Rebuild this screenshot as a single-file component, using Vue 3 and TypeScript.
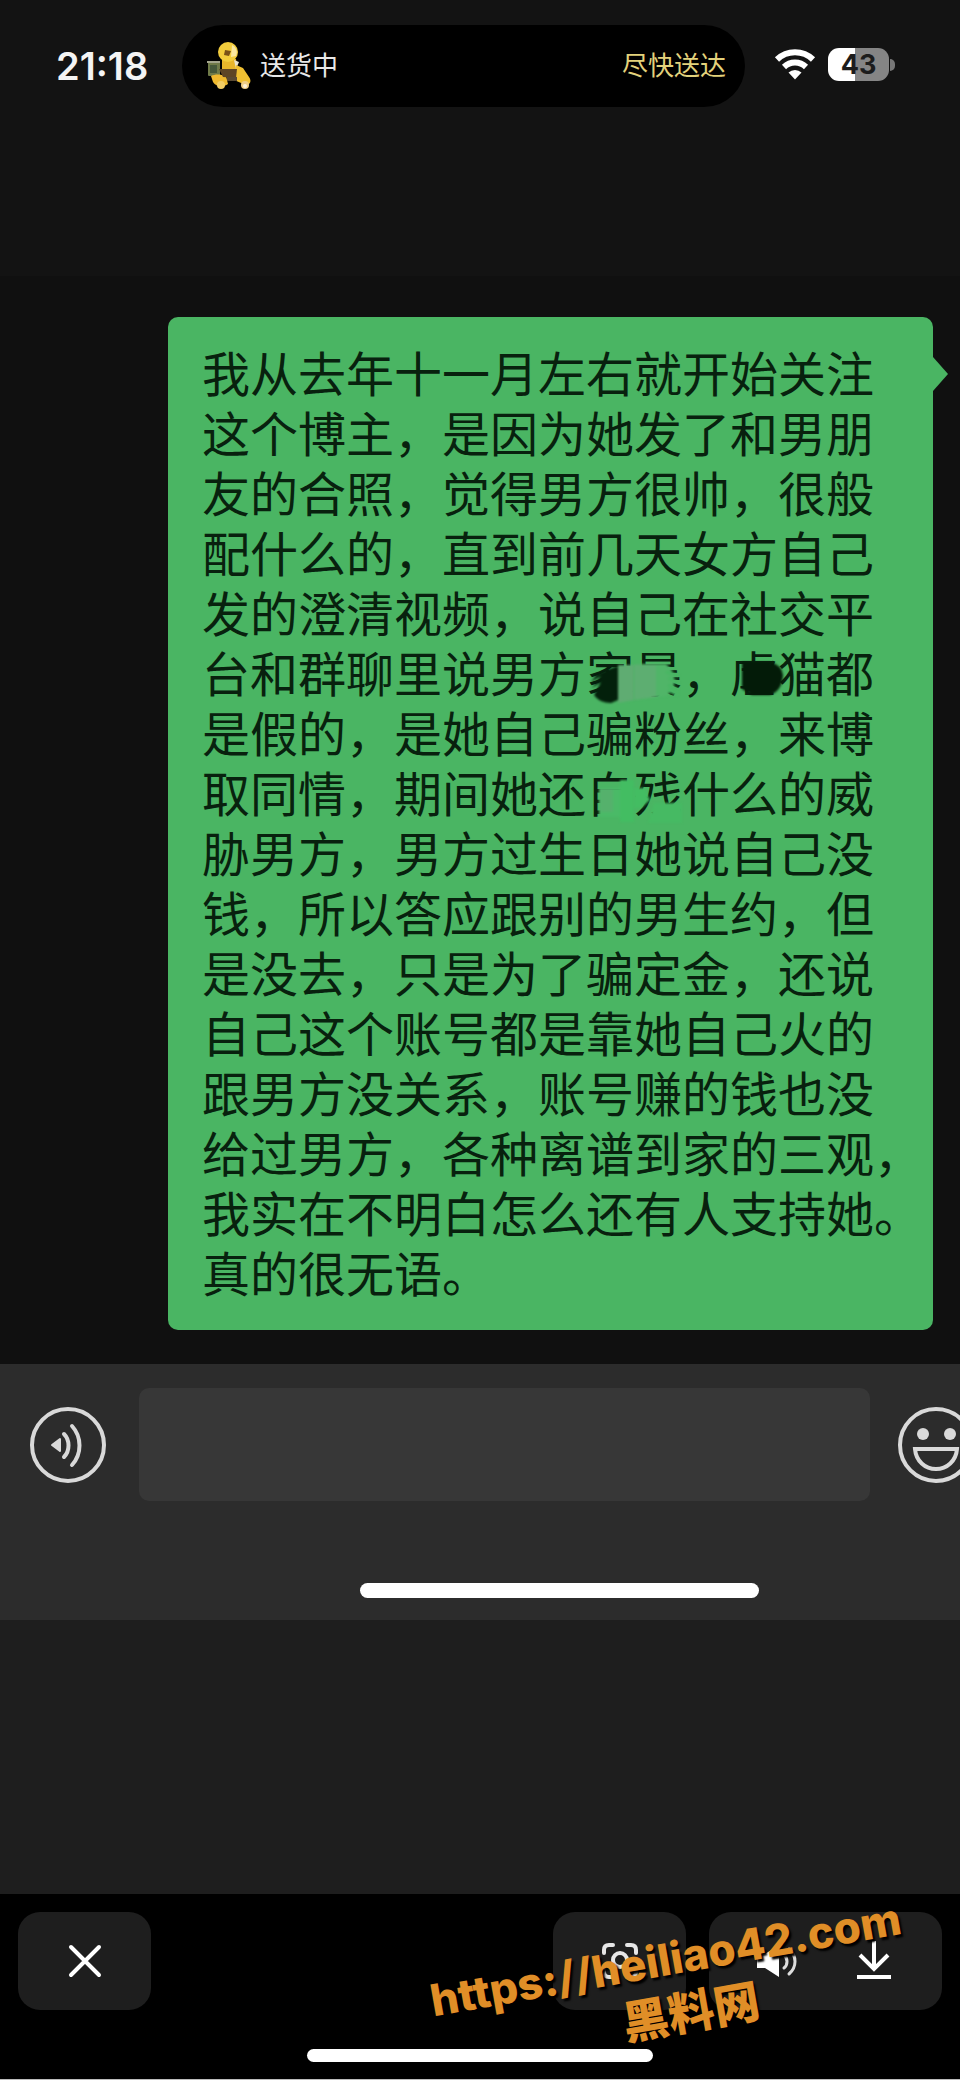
<script setup lang="ts">
interface Part {
  text: string
  smudge?: 'home' | 'storm' | 'cruel' | 'self' | 'hurt'
}

const lines: Part[][] = [
  [{ text: '我从去年十一月左右就开始关注' }],
  [{ text: '这个博主，是因为她发了和男朋' }],
  [{ text: '友的合照，觉得男方很帅，很般' }],
  [{ text: '配什么的，直到前几天女方自己' }],
  [{ text: '发的澄清视频，说自己在社交平' }],
  [
    { text: '台和群聊里说男方' },
    { text: '家', smudge: 'home' },
    { text: '暴', smudge: 'storm' },
    { text: '，' },
    { text: '虐', smudge: 'cruel' },
    { text: '猫都' },
  ],
  [{ text: '是假的，是她自己骗粉丝，来博' }],
  [
    { text: '取同情，期间她还' },
    { text: '自', smudge: 'self' },
    { text: '残', smudge: 'hurt' },
    { text: '什么的威' },
  ],
  [{ text: '胁男方，男方过生日她说自己没' }],
  [{ text: '钱，所以答应跟别的男生约，但' }],
  [{ text: '是没去，只是为了骗定金，还说' }],
  [{ text: '自己这个账号都是靠她自己火的' }],
  [{ text: '跟男方没关系，账号赚的钱也没' }],
  [{ text: '给过男方，各种离谱到家的三观，' }],
  [{ text: '我实在不明白怎么还有人支持她。' }],
  [{ text: '真的很无语。' }],
]
</script>

<template>
  <main class="screen">
    <header class="status">
      <time class="clock">21:18</time>
      <div class="island">
        <svg class="courier" viewBox="0 0 46 48" aria-hidden="true">
          <rect x="1" y="20" width="12" height="14" rx="1" fill="#6f7a48" />
          <rect x="3" y="23" width="7" height="8" fill="#45583a" />
          <path d="M0 20h13" stroke="#a3a58c" stroke-width="2" />
          <path d="M15 17h14l2 14-16 1z" fill="#e8b52b" />
          <path d="M27 18l5 2-3 7z" fill="#e9e3cf" />
          <path d="M4 34c4-2 9-2 15 0l2 8c-5 4-12 3-15-2z" fill="#efb92f" />
          <path d="M29 23l7 3 6 9c3 4 1 8-3 8l-12-5z" fill="#f0c032" />
          <path d="M12 27h18l-1 9-13-1z" fill="#5e4525" />
          <path d="M20 37h10" stroke="#594933" stroke-width="4" />
          <circle cx="21" cy="10" r="10" fill="#f2cc3c" />
          <path d="M25 3c4 2 6 6 4 11l-5 1z" fill="#fae7a0" />
          <path d="M18 8l6 1-2 5-5-1z" fill="#795117" />
          <circle cx="14" cy="43" r="4" fill="#f3cd65" />
          <circle cx="38" cy="43" r="4" fill="#f0cf87" />
          <circle cx="38" cy="44" r="2" fill="#fff2d8" />
        </svg>
        <span class="state">送货中</span>
        <span class="eta">尽快送达</span>
      </div>
      <svg class="wifi" viewBox="0 0 42 32" aria-label="Wi-Fi">
        <g fill="none" stroke="#fff" stroke-width="6">
          <path d="M3 11.500a26 26 0 0 1 36 0" />
          <path d="M10 19a16 16 0 0 1 22 0" />
        </g>
        <path d="M14.500 24.500a9.500 9.500 0 0 1 13 0L21 31.500z" fill="#fff" />
      </svg>
      <div class="battery"><span class="cell">43</span><i class="nub"></i></div>
    </header>

    <section class="chat">
      <div class="bubble">
        <p v-for="(line, i) in lines" :key="i" class="line">
          <span v-for="(part, j) in line" :key="j" :class="{ hidden: part.smudge }">{{ part.text
            }}<svg v-if="part.smudge" class="smudge" viewBox="0 0 48 60" aria-hidden="true">
              <template v-if="part.smudge === 'home'">
                <path d="M4 31l8-4-7 9 10-6-9 12 9-6-7 13c3 5 10 8 17 8l7-3V20l-9 3z" fill="#03200b" />
                <path d="M32 19h16v35l-16 3z" fill="#5fac72" />
              </template>
              <template v-else-if="part.smudge === 'storm'">
                <path d="M0 18h32c8 6 10 15 7 24l-6 8-33 4z" fill="#50b568" />
                <path d="M0 19h22v32l-22 3z" fill="#5dae71" />
                <path d="M32 26l13 4M34 32l11 5M34 39l10 5M34 44l10 5" stroke="#48b663" stroke-width="3" />
              </template>
              <template v-else-if="part.smudge === 'cruel'">
                <path d="M12 16h28q12 3 13 13-1 16-13 20H22l-10-6z" fill="#031b08" />
              </template>
              <template v-else-if="part.smudge === 'self'">
                <path d="M13 22h22v29H13z" fill="#4aba67" />
                <path d="M14 23h13v23H14z" fill="#55b16c" />
                <path d="M34 14h14v42H34z" fill="#43bd62" />
              </template>
              <template v-else>
                <path d="M0 22h10l6 12-9 8H0z" fill="#43bd62" />
                <path d="M20 37h28v20H14z" fill="#46ba63" />
              </template>
            </svg></span>
        </p>
      </div>
    </section>

    <section class="composer">
      <div class="entry">
        <button class="round" type="button" aria-label="Voice">
          <svg viewBox="0 0 78 78" aria-hidden="true">
            <circle cx="39" cy="39" r="36" fill="none" stroke="#d9d9d9" stroke-width="4" />
            <path d="M23 39l8-6v12z" fill="#d9d9d9" stroke="#d9d9d9" stroke-width="2" stroke-linejoin="round" />
            <g fill="none" stroke="#d9d9d9" stroke-width="4" stroke-linecap="round">
              <path d="M35 28c6 6 6 17 0 23" />
              <path d="M43 20c10 11 10 28 0 39" />
            </g>
          </svg>
        </button>
        <input class="field" type="text" aria-label="Message" />
        <button class="round" type="button" aria-label="Emoji">
          <svg viewBox="0 0 78 78" aria-hidden="true">
            <circle cx="39" cy="39" r="36" fill="none" stroke="#d9d9d9" stroke-width="4" />
            <circle cx="26" cy="28" r="6" fill="#d9d9d9" />
            <circle cx="53" cy="28" r="6" fill="#d9d9d9" />
            <path d="M18 43h42c-1 12-10 20-21 20s-20-8-21-20z" fill="none" stroke="#d9d9d9" stroke-width="4" />
          </svg>
        </button>
      </div>
      <div class="homebar inner"></div>
    </section>

    <div class="gap"></div>

    <footer class="dock">
      <div class="tools">
        <button class="tool" type="button" aria-label="Close">
          <svg viewBox="0 0 44 44" aria-hidden="true">
            <path d="M8 8l28 28M36 8L8 36" stroke="#fff" stroke-width="4" stroke-linecap="round" />
          </svg>
        </button>
        <button class="tool scan" type="button" aria-label="Scan">
          <svg viewBox="0 0 44 44" aria-hidden="true">
            <g fill="none" stroke="#e6e6e6" stroke-width="4" stroke-linecap="round">
              <path d="M6 14v-3q0-5 5-5h4M29 6h4q5 0 5 5v3M38 30v3q0 5-5 5h-4M15 38h-4q-5 0-5-5v-3" />
              <circle cx="22" cy="21" r="7" />
            </g>
          </svg>
        </button>
        <div class="pair">
          <button type="button" aria-label="Sound">
            <svg viewBox="0 0 44 44" aria-hidden="true">
              <path d="M2 15h8l14-9v32l-14-9H2z" fill="#fff" />
              <g fill="none" stroke="#ddd" stroke-width="3" stroke-linecap="round">
                <path d="M29 16c4 3 4 10 0 13" />
                <path d="M34 10c8 7 8 18 0 25" />
              </g>
            </svg>
          </button>
          <button type="button" aria-label="Download">
            <svg viewBox="0 0 44 44" aria-hidden="true">
              <path d="M22 2v26M8 16l14 14 14-14" fill="none" stroke="#fff" stroke-width="4" />
              <path d="M5 38h34" stroke="#fff" stroke-width="4" />
            </svg>
          </button>
        </div>
      </div>
      <div class="homebar outer"></div>
      <div class="mark">
        <div>https://heiliao42.com</div>
        <div class="site">黑料网</div>
      </div>
    </footer>
  </main>
</template>

<style>
body {
  background: #000;
}
</style>

<style scoped>
.screen {
  display: flex;
  flex-direction: column;
  min-height: 100vh;
  box-sizing: border-box;
  overflow: hidden;
  border-bottom: 1px solid #bbb;
  background: #101010;
  font-family: "Liberation Sans", "Noto Sans CJK SC", sans-serif;
}
button {
  display: flex;
  align-items: center;
  justify-content: center;
  padding: 0;
  border: 0;
  background: none;
}
.status {
  display: flex;
  align-items: flex-start;
  height: 251px;
  padding: 25px 65px 0 56px;
  background: #131313;
}
.clock {
  width: 126px;
  color: #f4f4f4;
  font: 600 38px/82px Inter, sans-serif;
}
.island {
  display: flex;
  flex: 1;
  align-items: center;
  height: 82px;
  padding: 0 19px 0 25px;
  border-radius: 41px;
  background: #000;
  font-size: 26px;
  line-height: 36px;
}
.courier {
  width: 46px;
  height: 48px;
  margin-right: 7px;
}
.state {
  color: #e8e8e8;
}
.eta {
  margin-left: auto;
  color: #e3d27c;
}
.wifi {
  width: 42px;
  height: 32px;
  margin: 23px 12px 0 29px;
}
.battery {
  display: flex;
  align-items: center;
  margin-top: 23px;
}
.cell {
  width: 61px;
  border-radius: 11px;
  background: linear-gradient(90deg, #fff 44%, #858585 44%);
  color: #1c1c1c;
  font: 700 27px/33px Inter, sans-serif;
  text-align: center;
}
.nub {
  width: 5px;
  height: 12px;
  margin-left: 1px;
  border-radius: 0 6px 6px 0;
  background: #777;
}
.chat {
  padding: 41px 27px 34px 168px;
}
.bubble {
  position: relative;
  padding: 29px 0 24px 34px;
  border-radius: 10px;
  background: #4ab563;
  color: #08210e;
  font-size: 48px;
  line-height: 60px;
}
.bubble::after {
  position: absolute;
  top: 40px;
  left: 100%;
  width: 15px;
  height: 34px;
  background: #4ab563;
  clip-path: polygon(0 0, 100% 50%, 0 100%);
  content: "";
}
.line {
  margin: 0;
  white-space: nowrap;
}
.hidden {
  position: relative;
}
.smudge {
  position: absolute;
  top: 50%;
  left: 0;
  width: 48px;
  height: 60px;
  margin-top: -30px;
  overflow: visible;
  filter: blur(1px);
}
.composer {
  height: 256px;
  box-sizing: border-box;
  padding-top: 24px;
  background: #2c2c2c;
}
.entry {
  display: flex;
  align-items: center;
  margin-right: -15px;
  padding-left: 29px;
}
.round {
  flex: none;
  width: 78px;
  height: 78px;
}
.round svg {
  width: 78px;
  height: 78px;
}
.field {
  flex: 1;
  min-width: 0;
  height: 113px;
  margin: 0 27px 0 32px;
  padding: 0 20px;
  box-sizing: border-box;
  border: 0;
  border-radius: 10px;
  background: #373737;
  color: #ddd;
  font-size: 40px;
}
.homebar {
  border-radius: 8px;
  background: #fff;
}
.inner {
  width: 41.6%;
  height: 15px;
  margin: 82px 0 0 37.5%;
}
.gap {
  flex: 1;
  min-height: 274px;
  background: #1e1e1e;
}
.dock {
  position: relative;
  padding: 18px 18px 17px;
  background: #000;
}
.tools {
  display: flex;
}
.tool,
.pair {
  width: 133px;
  height: 98px;
  border-radius: 22px;
  background: #1e1e1e;
}
.scan {
  margin: 0 23px 0 auto;
}
.pair {
  display: flex;
  align-items: center;
  justify-content: space-between;
  width: 233px;
  box-sizing: border-box;
  padding: 0 46px;
}
.tools svg {
  width: 44px;
  height: 44px;
}
.outer {
  width: 37.4%;
  height: 13px;
  margin: 39px auto 0;
}
.mark {
  position: absolute;
  right: 51px;
  bottom: 41px;
  color: #e08e27;
  font: 800 44px/46px Inter, "Noto Sans CJK SC", sans-serif;
  text-align: center;
  text-shadow: 2px 3px 2px #000;
  white-space: nowrap;
  transform: rotate(-10deg);
  pointer-events: none;
}
.site {
  margin-top: 10px;
  padding-left: 32px;
  font-weight: 900;
  font-size: 46px;
}
</style>
